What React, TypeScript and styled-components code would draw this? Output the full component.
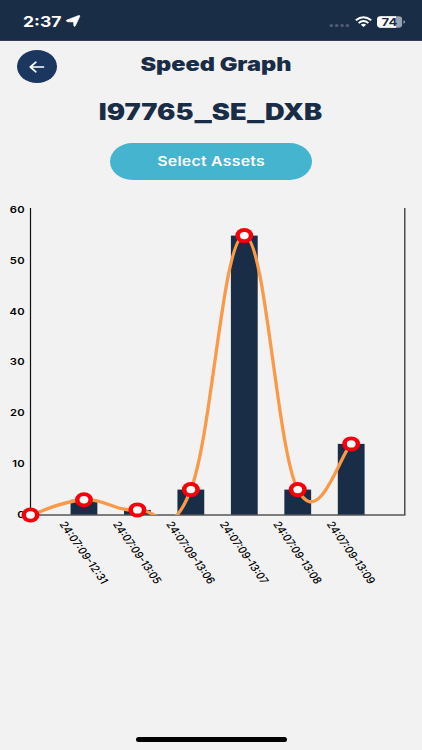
import React from "react";
import styled, { createGlobalStyle } from "styled-components";

const NAVY = "#1a2d47";

const GlobalStyle = createGlobalStyle`
  * { box-sizing: border-box; }
  body { margin: 0; background: #f2f2f2; font-family: Inter, "Liberation Sans", sans-serif; }
`;

const Screen = styled.main`
  display: flex;
  flex-direction: column;
  width: 422px;
  height: 750px;
  overflow: hidden;
  background: #f2f2f2;
`;

const StatusBar = styled.header`
  display: flex;
  align-items: center;
  justify-content: space-between;
  height: 41px;
  padding: 3px 16px 0 23px;
  background: ${NAVY};
  border-bottom: 1px solid #343c5c;
  color: #fff;
`;

const StatusGroup = styled.div<{ $gap: number }>`
  display: flex;
  align-items: center;
  gap: ${(p) => p.$gap}px;
`;

const WideText = styled.span<{ $size: number; $weight: number; $stretch: number; $spacing?: number }>`
  display: block;
  font-size: ${(p) => p.$size}px;
  font-weight: ${(p) => p.$weight};
  letter-spacing: ${(p) => p.$spacing ?? 0}px;
  line-height: 1.2;
  white-space: nowrap;
  transform: scaleX(${(p) => p.$stretch});
`;

const Clock = styled(WideText)`
  width: 39px;
  transform-origin: left center;
`;

const TitleBar = styled.div`
  display: grid;
  grid-template-columns: 57px 1fr 47px;
  height: 51px;
  padding-top: 9px;
`;

const BackButton = styled.button`
  display: grid;
  place-items: center;
  width: 40px;
  height: 33px;
  margin-left: 17px;
  padding: 0;
  border: 0;
  border-radius: 50%;
  background: #1b365f;
`;

const Title = styled.h1`
  display: flex;
  justify-content: center;
  margin: 3px 0 0;
  color: ${NAVY};
`;

const AssetName = styled.h2`
  display: flex;
  justify-content: center;
  height: 51px;
  margin: 0;
  padding-top: 7px;
  color: ${NAVY};
`;

const Underscore = styled.span`
  display: inline-block;
  width: 15px;
  text-align: center;
  transform: scaleX(1.3);
`;

const SelectButton = styled.button`
  display: flex;
  align-items: center;
  justify-content: center;
  align-self: center;
  width: 202px;
  height: 37px;
  padding: 0;
  border: 0;
  border-radius: 22.5px / 18.5px;
  background: #45b4ce;
  color: #fff;
  font-family: inherit;
`;

const Chart = styled.svg`
  display: block;
  width: 422px;
  height: 420px;
  font-family: Inter, "Liberation Sans", sans-serif;
`;

const TimeLabel = styled.text`
  font-size: 9.5px;
  font-weight: 550;
  fill: #000;
`;

const HomeIndicator = styled.div`
  align-self: center;
  width: 151px;
  height: 5px;
  margin-top: auto;
  margin-bottom: 8px;
  border-radius: 3px;
  background: #000;
`;

const readings = [
  { label: "", speed: 0 },
  { label: "24:07:09-12:31", speed: 3 },
  { label: "24:07:09-13:05", speed: 1 },
  { label: "24:07:09-13:06", speed: 5 },
  { label: "24:07:09-13:07", speed: 55 },
  { label: "24:07:09-13:08", speed: 5 },
  { label: "24:07:09-13:09", speed: 14 },
];

const BASE = 335;
const xAt = (i: number) => 30.5 + i * 53.45;
const yAt = (v: number) => BASE - v * 5.08;

// Cubic curve whose tangents follow the neighbouring readings.
function curvePath() {
  const pts = readings.map((r, i) => [xAt(i), yAt(r.speed)]);
  const at = (i: number) => pts[Math.max(0, Math.min(pts.length - 1, i))];
  const k = 0.2;
  let d = `M${pts[0][0]} ${pts[0][1]}`;
  for (let i = 1; i < pts.length; i++) {
    const [pp, p, c, n] = [at(i - 2), at(i - 1), at(i), at(i + 1)];
    d += ` C${p[0] + (c[0] - pp[0]) * k} ${p[1] + (c[1] - pp[1]) * k} ${c[0] - (n[0] - p[0]) * k} ${c[1] - (n[1] - p[1]) * k} ${c[0]} ${c[1]}`;
  }
  return d;
}

function SpeedChart() {
  return (
    <Chart viewBox="0 0 422 420">
      <defs>
        <clipPath id="plot">
          <rect x="30" y="28" width="375" height="307" />
        </clipPath>
      </defs>
      {[0, 10, 20, 30, 40, 50, 60].map((v) => (
        <text
          key={v}
          transform={`translate(25 ${yAt(v) + 2.8}) scale(1.22 1)`}
          textAnchor="end"
          fontSize="9.2"
          fontWeight="600"
          letterSpacing="0.3"
        >
          {v}
        </text>
      ))}
      {readings.slice(1).map((r, i) => (
        <rect key={r.label} x={xAt(i + 1) - 13.4} y={yAt(r.speed)} width="26.8" height={BASE - yAt(r.speed)} fill={NAVY} />
      ))}
      <path d="M30.5 28V335" stroke="#111" strokeWidth="1.2" />
      <path d="M404.8 28V335" stroke="#222" strokeWidth="1.2" />
      <path d="M30 335H405.4" stroke="#555" strokeWidth="1.4" />
      <path d={curvePath()} fill="none" stroke="#fa9a48" strokeWidth="3.3" clipPath="url(#plot)" />
      {readings.map((r, i) => (
        <g key={i}>
          <ellipse cx={xAt(i)} cy={yAt(r.speed)} rx="9" ry="7.5" fill="#f80009" />
          <ellipse cx={xAt(i)} cy={yAt(r.speed)} rx="4.4" ry="3.7" fill="#fff" />
        </g>
      ))}
      {readings.slice(1).map((r, i) => (
        <TimeLabel
          key={r.label}
          transform={`translate(${xAt(i + 1) - 25} 344) scale(1.22 1) rotate(60)`}
          textLength="70"
        >
          {r.label}
        </TimeLabel>
      ))}
    </Chart>
  );
}

export default function App() {
  return (
    <Screen>
      <GlobalStyle />
      <StatusBar>
        <StatusGroup $gap={4}>
          <Clock $size={14.5} $weight={650} $stretch={1.21}>2:37</Clock>
          <svg width="15" height="12" viewBox="0 0 15 12">
            <path d="M.9 5.1 12.6.6q1.6-.5 1.1.8L9.4 10.7q-.9 1.5-1.5 0L7.6 6.9 1.5 6.7Q-.5 6 .9 5.1Z" fill="#fff" stroke="#fff" strokeWidth=".7" />
          </svg>
        </StatusGroup>
        <StatusGroup $gap={5}>
          <svg width="21" height="12" viewBox="0 0 21 12">
            {[2.3, 7.7, 13.1, 18.4].map((x) => (
              <ellipse key={x} cx={x} cy="9.4" rx="1.8" ry="1.5" fill="#4f5e75" />
            ))}
          </svg>
          <svg width="17" height="12" viewBox="0 0 17 12" fill="none" stroke="#fff">
            <path d="M.8 4.2Q8.5-1.8 16.2 4.2" strokeWidth="2" />
            <path d="M3.6 7Q8.5 3.2 13.4 7" strokeWidth="1.9" />
            <path d="m5.8 8.7 2.7 2.3 2.7-2.3Q8.5 6.9 5.8 8.7Z" fill="#fff" stroke="none" />
          </svg>
          <svg width="29" height="12" viewBox="0 0 29 12">
            <defs>
              <clipPath id="cell">
                <rect x="0" y=".3" width="25.3" height="11.4" rx="3.8" ry="3.4" />
              </clipPath>
            </defs>
            <g clipPath="url(#cell)">
              <rect width="25.3" height="12" fill="#98a2b0" />
              <rect width="19" height="12" fill="#fff" />
            </g>
            <path d="M26.5 4.3q1.7.4 1.7 1.7t-1.7 1.7Z" fill="#98a2b0" />
            <text transform="translate(12.4 9.8) scale(1.22 1)" textAnchor="middle" fontSize="10.8" fontWeight="750" fill={NAVY}>
              74
            </text>
          </svg>
        </StatusGroup>
      </StatusBar>
      <TitleBar>
        <BackButton aria-label="Back">
          <svg width="16" height="12" viewBox="0 0 16 12" fill="none" stroke="#fff" strokeWidth="1.7" strokeLinecap="round" strokeLinejoin="round">
            <path d="M14.5 6H1.5M6.9 1.2 1.3 6l5.6 4.8" />
          </svg>
        </BackButton>
        <Title>
          <WideText $size={19.3} $weight={900} $stretch={1.22}>Speed Graph</WideText>
        </Title>
      </TitleBar>
      <AssetName>
        <WideText $size={22.3} $weight={900} $stretch={1.22}>
          I97765<Underscore>_</Underscore>SE<Underscore>_</Underscore>DXB
        </WideText>
      </AssetName>
      <SelectButton>
        <WideText $size={13} $weight={600} $stretch={1.22} $spacing={0.2}>Select Assets</WideText>
      </SelectButton>
      <SpeedChart />
      <HomeIndicator />
    </Screen>
  );
}
